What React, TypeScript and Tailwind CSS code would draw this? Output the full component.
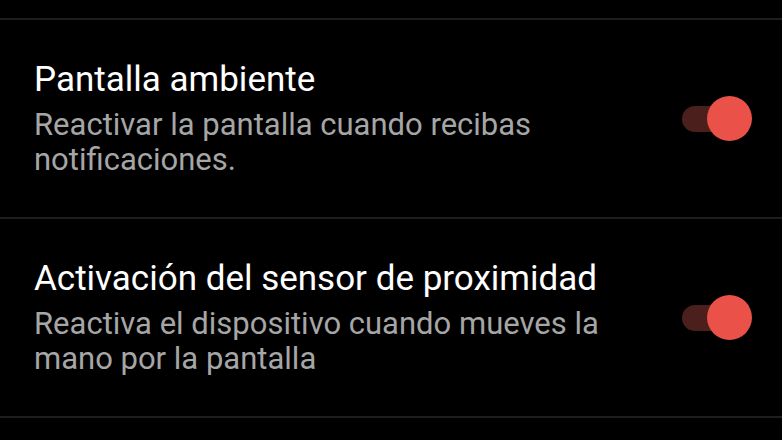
const rows = [
  {
    title: 'Pantalla ambiente',
    desc: ['Reactivar la pantalla cuando recibas', 'notificaciones.'],
  },
  {
    title: 'Activación del sensor de proximidad',
    desc: ['Reactiva el dispositivo cuando mueves la', 'mano por la pantalla'],
  },
];

function Toggle() {
  return (
    <div className="relative w-[70px] h-[46px] shrink-0">
      <div className="absolute left-0 top-[10px] w-[56px] h-[26px] rounded-full bg-[#4a1f1c]" />
      <div className="absolute right-0 top-0 w-[45px] h-[45px] rounded-full bg-[#ea5148]" />
    </div>
  );
}

export default function App() {
  return (
    <div className="w-[782px] h-[440px] bg-black overflow-hidden" style={{ fontFamily: 'Roboto, "Noto Sans", sans-serif' }}>
      <div className="h-[18px]" />
      <div className="border-t-2 border-[#1e1e1e]">
        {rows.map((r) => (
          <div key={r.title} className="h-[199px] border-b-2 border-[#1e1e1e] flex items-center pl-[34px] pr-[30px]">
            <div className="flex-1">
              <div className="text-[35px] leading-[40px] text-white">{r.title}</div>
              <div className="text-[31px] leading-[35px] text-[#a6a6a6] mt-[7px]">
                {r.desc.map((d) => (
                  <div key={d}>{d}</div>
                ))}
              </div>
            </div>
            <Toggle />
          </div>
        ))}
      </div>
    </div>
  );
}
